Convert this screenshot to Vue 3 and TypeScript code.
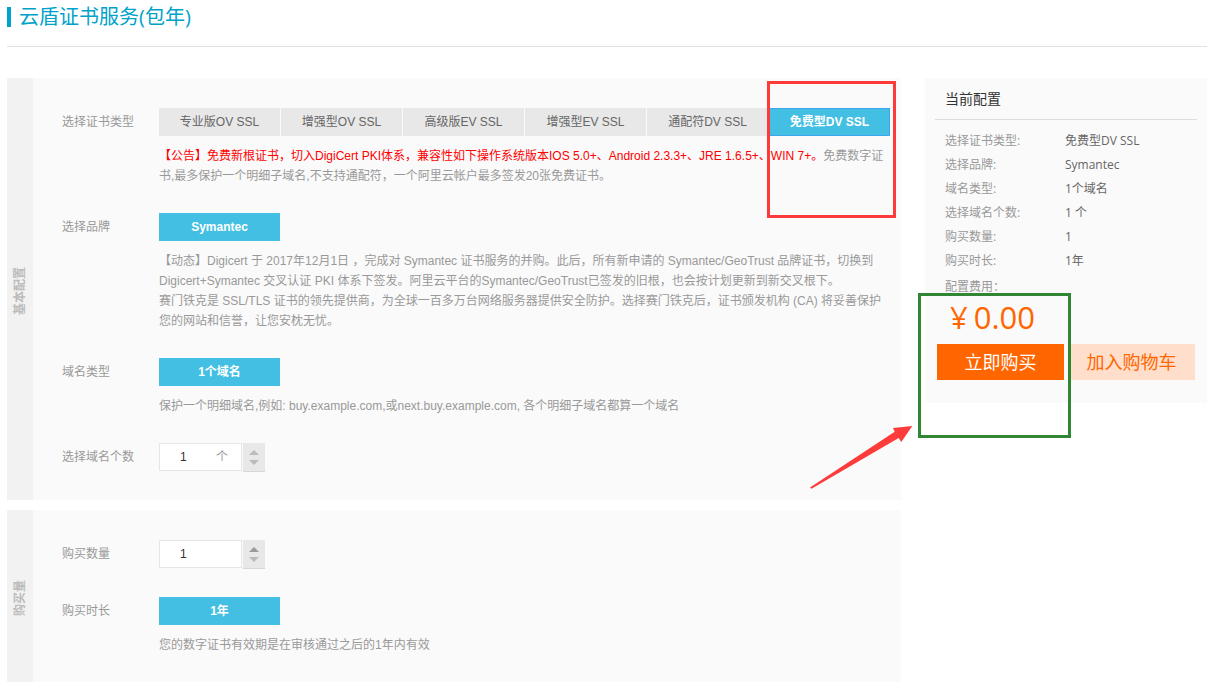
<script setup lang="ts">
import { ref } from 'vue'

const certTypes: string[] = [
  '专业版OV SSL',
  '增强型OV SSL',
  '高级版EV SSL',
  '增强型EV SSL',
  '通配符DV SSL',
  '免费型DV SSL',
]
const selectedType = ref<string>('免费型DV SSL')
const domainCount = ref<number>(1)
const quantity = ref<number>(1)

const step = (value: number, delta: number): number => Math.max(1, value + delta)
</script>

<template>
  <div class="page">
    <header class="page-head">
      <h1>云盾证书服务(包年)</h1>
    </header>

    <div class="layout">
      <main class="main">
        <section class="panel">
          <h2 class="strip"><span>基本配置</span></h2>
          <div class="rows">
            <div class="row">
              <span class="label">选择证书类型</span>
              <div class="field">
                <div class="options">
                  <div v-for="type in certTypes" :key="type" class="option-slot">
                    <button
                      type="button"
                      class="option"
                      :class="{ active: type === selectedType, outlined: type === selectedType }"
                      @click="selectedType = type"
                    >{{ type }}</button>
                    <div v-if="type === '免费型DV SSL'" class="mark mark-red"></div>
                  </div>
                </div>
                <p class="note"><span class="notice">【公告】免费新根证书，切入DigiCert PKI体系，兼容性如下操作系统版本IOS 5.0+、Android 2.3.3+、JRE 1.6.5+、WIN 7+。</span>免费数字证书,最多保护一个明细子域名,不支持通配符，一个阿里云帐户最多签发20张免费证书。</p>
              </div>
            </div>

            <div class="row">
              <span class="label">选择品牌</span>
              <div class="field">
                <button type="button" class="option active">Symantec</button>
                <p class="note">【动态】Digicert 于 2017年12月1日 ，完成对 Symantec 证书服务的并购。此后，所有新申请的 Symantec/GeoTrust 品牌证书，切换到 Digicert+Symantec 交叉认证 PKI 体系下签发。阿里云平台的Symantec/GeoTrust已签发的旧根，也会按计划更新到新交叉根下。<br>赛门铁克是 SSL/TLS 证书的领先提供商，为全球一百多万台网络服务器提供安全防护。选择赛门铁克后，证书颁发机构 (CA) 将妥善保护您的网站和信誉，让您安枕无忧。</p>
              </div>
            </div>

            <div class="row">
              <span class="label">域名类型</span>
              <div class="field">
                <button type="button" class="option active">1个域名</button>
                <p class="note">保护一个明细域名,例如: buy.example.com,或next.buy.example.com, 各个明细子域名都算一个域名</p>
              </div>
            </div>

            <div class="row">
              <label class="label" for="domain-count">选择域名个数</label>
              <div class="field">
                <div class="stepper">
                  <div class="number">
                    <input id="domain-count" v-model.number="domainCount" type="text">
                    <span class="unit">个</span>
                  </div>
                  <div class="spin">
                    <button type="button" aria-label="增加" @click="domainCount = step(domainCount, 1)">
                      <svg width="10" height="5" viewBox="0 0 10 5"><path d="M5 0L10 5H0Z" /></svg>
                    </button>
                    <button type="button" aria-label="减少" @click="domainCount = step(domainCount, -1)">
                      <svg width="10" height="5" viewBox="0 0 10 5"><path d="M0 0H10L5 5Z" /></svg>
                    </button>
                  </div>
                </div>
              </div>
            </div>
          </div>
        </section>

        <section class="panel">
          <h2 class="strip"><span>购买量</span></h2>
          <div class="rows">
            <div class="row">
              <label class="label" for="quantity">购买数量</label>
              <div class="field">
                <div class="stepper">
                  <div class="number">
                    <input id="quantity" v-model.number="quantity" type="text">
                  </div>
                  <div class="spin">
                    <button type="button" class="ready" aria-label="增加" @click="quantity = step(quantity, 1)">
                      <svg width="10" height="5" viewBox="0 0 10 5"><path d="M5 0L10 5H0Z" /></svg>
                    </button>
                    <button type="button" aria-label="减少" @click="quantity = step(quantity, -1)">
                      <svg width="10" height="5" viewBox="0 0 10 5"><path d="M0 0H10L5 5Z" /></svg>
                    </button>
                  </div>
                </div>
              </div>
            </div>

            <div class="row">
              <span class="label">购买时长</span>
              <div class="field">
                <button type="button" class="option active">1年</button>
                <p class="note">您的数字证书有效期是在审核通过之后的1年内有效</p>
              </div>
            </div>
          </div>
        </section>
      </main>

      <aside class="summary">
        <h2>当前配置</h2>
        <dl>
          <div><dt>选择证书类型:</dt><dd>{{ selectedType }}</dd></div>
          <div><dt>选择品牌:</dt><dd>Symantec</dd></div>
          <div><dt>域名类型:</dt><dd>1个域名</dd></div>
          <div><dt>选择域名个数:</dt><dd>{{ domainCount }} 个</dd></div>
          <div><dt>购买数量:</dt><dd>{{ quantity }}</dd></div>
          <div><dt>购买时长:</dt><dd>1年</dd></div>
        </dl>
        <p class="cost-label">配置费用：</p>
        <p class="price"><span>¥</span><span>0.00</span></p>
        <div class="actions">
          <div class="action-slot">
            <button type="button" class="buy">立即购买</button>
            <div class="mark mark-green"></div>
          </div>
          <div class="action-slot">
            <button type="button" class="cart">加入购物车</button>
          </div>
        </div>
        <svg class="arrow" width="103" height="64" viewBox="0 0 103 64">
          <path d="M0 61.5L84.7 5.7L83 2L102.3 0L91.3 16L88.7 12L1.5 62.7Z" fill="#fd3b3a" />
        </svg>
      </aside>
    </div>
  </div>
</template>

<style>
body {
  margin: 0;
  background: #fff;
}
</style>

<style scoped>
.page {
  padding: 7px 19px 2px 7px;
  color: #999;
  font: 12px/20px "Liberation Sans", "Noto Sans CJK SC", sans-serif;
}

h1,
h2,
p,
dl,
dd {
  margin: 0;
  font-weight: normal;
}

button,
input {
  margin: 0;
  padding: 0;
  border: 0;
  border-radius: 0;
  font: inherit;
}

button {
  cursor: pointer;
}

.page-head {
  padding-bottom: 19px;
  border-bottom: 1px solid #e1e1e1;
}

h1 {
  padding-left: 8px;
  border-left: 4px solid #00a2ca;
  color: #00a2ca;
  font: 20px/20px "Open Sans", "Noto Sans CJK SC", sans-serif;
}

.layout {
  display: flex;
  align-items: flex-start;
  gap: 24px;
  margin-top: 31px;
}

.main {
  display: flex;
  flex: 1;
  flex-direction: column;
  gap: 10px;
  min-width: 0;
}

.panel {
  display: flex;
  background: #fafafa;
}

.strip {
  display: flex;
  box-sizing: border-box;
  flex: 0 0 26px;
  align-items: center;
  justify-content: center;
  padding-top: 4px;
  background: #f2f2f2;
  color: #bbb;
  font-size: 12px;
  font-weight: bold;
}

.strip span {
  line-height: 26px;
  text-orientation: sideways;
  transform: rotate(180deg);
  writing-mode: vertical-rl;
}

.rows {
  flex: 1;
  min-width: 0;
  padding: 30px 11px 0 29px;
}

.row {
  display: flex;
  align-items: flex-start;
  padding-bottom: 27px;
}

.label {
  flex: 0 0 97px;
  line-height: 28px;
}

.field {
  flex: 1;
  min-width: 0;
}

.options {
  display: flex;
  flex-wrap: wrap;
  gap: 1px;
}

.option-slot {
  position: relative;
}

.option {
  display: block;
  width: 121px;
  height: 28px;
  background: #e8e8e8;
  color: #666;
}

.option.active {
  background: #43bfe3;
  color: #fff;
  font-weight: bold;
}

.option.outlined {
  border: 1px solid #3ea5ef;
}

.note {
  margin-top: 10px;
}

.notice {
  color: #f00;
}

.stepper {
  display: flex;
  gap: 1px;
  height: 30px;
}

.number {
  display: flex;
  box-sizing: border-box;
  width: 83px;
  height: 28px;
  border: 1px solid #e6e6e6;
  background: #fff;
  line-height: 26px;
}

.number input {
  flex: 1;
  min-width: 0;
  padding-left: 20px;
  background: transparent;
  color: #333;
}

.unit {
  padding-right: 13px;
}

.spin {
  display: flex;
  flex-direction: column;
  box-sizing: border-box;
  width: 22px;
  height: 29px;
  padding: 4px 0;
  border-bottom: 1px solid #d6d6d6;
  background: #e8e8e8;
}

.spin button {
  display: flex;
  flex: 1;
  align-items: center;
  justify-content: center;
  background: transparent;
}

.spin path {
  fill: #bbb;
}

.spin .ready path {
  fill: #999;
}

.summary {
  position: relative;
  box-sizing: border-box;
  flex: 0 0 282px;
  padding: 0 10px 23px;
  background: #fafafa;
  font-family: "Open Sans", "Noto Sans CJK SC", sans-serif;
}

.summary h2 {
  padding-left: 10px;
  border-bottom: 1px solid #ddd;
  color: #333;
  font-size: 14px;
  line-height: 41px;
}

.summary dl {
  padding: 9px 10px 0;
  line-height: 24px;
}

.summary dl div {
  display: flex;
}

.summary dt {
  flex: 0 0 120px;
}

.summary dd {
  color: #666;
}

.cost-label {
  padding: 4px 10px 0;
}

.price {
  display: flex;
  gap: 6px;
  padding: 0 15px 7px;
  color: #f60;
  font-size: 31px;
  line-height: 40px;
}

.actions {
  display: flex;
  gap: 4px;
  padding: 0 2px;
}

.action-slot {
  position: relative;
  flex: 1;
}

.buy,
.cart {
  display: block;
  width: 100%;
  height: 36px;
  font-size: 18px;
}

.buy {
  background: #f60;
  color: #fff;
}

.cart {
  background: #ffdfcb;
  color: #f60;
}

.mark {
  position: absolute;
  z-index: 1;
  box-sizing: border-box;
  pointer-events: none;
}

.mark-red {
  top: -27px;
  left: -2px;
  width: 129px;
  height: 137px;
  border: 3px solid #fd3b3a;
}

.mark-green {
  top: -51px;
  left: -19px;
  width: 153px;
  height: 145px;
  border: 3px solid #318633;
}

.arrow {
  position: absolute;
  top: 348px;
  left: -115px;
  pointer-events: none;
}
</style>
